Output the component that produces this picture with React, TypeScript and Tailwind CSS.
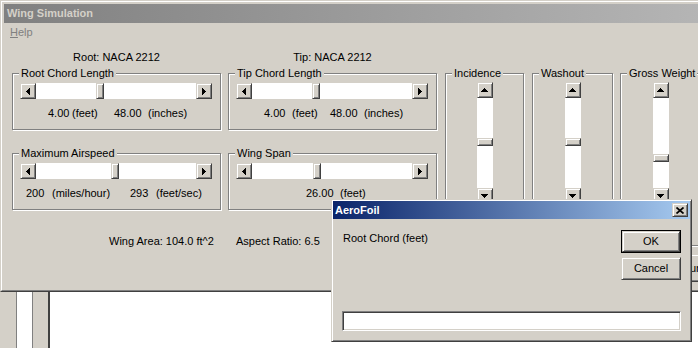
const FACE = "bg-[#d4d0c8]";
const RAISED =
  "border border-t-[#d4d0c8] border-l-[#d4d0c8] border-r-[#404040] border-b-[#404040] shadow-[inset_1px_1px_0_#ffffff,inset_-1px_-1px_0_#808080]";
const SUNKEN =
  "border border-t-[#808080] border-l-[#808080] border-r-white border-b-white shadow-[inset_1px_1px_0_#404040,inset_-1px_-1px_0_#d4d0c8]";

// little pixel triangles used on the scroll buttons
function Tri({ dir }: { dir: "left" | "right" | "up" | "down" }) {
  const rows = [0, 1, 2, 3];
  if (dir === "left" || dir === "right") {
    return (
      <svg width="4" height="7" viewBox="0 0 4 7" shapeRendering="crispEdges">
        {rows.map((i) => (
          <rect key={i} x={dir === "left" ? i : 3 - i} y={3 - i} width="1" height={2 * i + 1} fill="#000" />
        ))}
      </svg>
    );
  }
  return (
    <svg width="7" height="4" viewBox="0 0 7 4" shapeRendering="crispEdges">
      {rows.map((i) => (
        <rect key={i} y={dir === "up" ? i : 3 - i} x={3 - i} height="1" width={2 * i + 1} fill="#000" />
      ))}
    </svg>
  );
}

function HScroll({ pos }: { pos: number }) {
  return (
    <div className="flex h-[16px] w-[192px]">
      <div className={`${RAISED} ${FACE} flex w-[16px] items-center justify-center`}>
        <Tri dir="left" />
      </div>
      <div className="flex flex-1 bg-white">
        <div className={`${RAISED} ${FACE} w-[8px]`} style={{ marginLeft: pos }} />
      </div>
      <div className={`${RAISED} ${FACE} flex w-[16px] items-center justify-center`}>
        <Tri dir="right" />
      </div>
    </div>
  );
}

function VScroll({ pos }: { pos: number }) {
  return (
    <div className="mx-auto flex h-[122px] w-[16px] flex-col">
      <div className={`${RAISED} ${FACE} flex h-[16px] items-center justify-center`}>
        <Tri dir="up" />
      </div>
      <div className="flex flex-1 flex-col bg-white">
        <div className={`${RAISED} ${FACE} h-[8px]`} style={{ marginTop: pos }} />
      </div>
      <div className={`${RAISED} ${FACE} flex h-[16px] items-center justify-center`}>
        <Tri dir="down" />
      </div>
    </div>
  );
}

function Group({ label, className, children }: { label: string; className: string; children: React.ReactNode }) {
  return (
    <div className={`relative border border-[#808080] shadow-[inset_1px_1px_0_#ffffff,1px_1px_0_#ffffff] ${className}`}>
      <span className="absolute -top-[8px] left-[6px] bg-[#d4d0c8] px-[2px] leading-[14px] whitespace-nowrap">{label}</span>
      {children}
    </div>
  );
}

function SliderGroup({ label, pos, children }: { label: string; pos: number; children: React.ReactNode }) {
  return (
    <Group label={label} className="h-[57px] w-[209px] pl-[7px] pt-[9px]">
      <HScroll pos={pos} />
      <div className="mt-[7px] flex h-[14px] leading-[14px] whitespace-nowrap [&>span]:shrink-0">{children}</div>
    </Group>
  );
}

function Button({ children, isDefault }: { children: React.ReactNode; isDefault?: boolean }) {
  return (
    <div className={`h-[23px] w-[60px] ${isDefault ? "border border-black" : ""}`}>
      <div className={`${RAISED} ${FACE} flex h-full items-center justify-center leading-none`}>{children}</div>
    </div>
  );
}

export default function App() {
  return (
    <div className="relative h-[348px] w-[698px] overflow-hidden bg-white font-['Liberation_Sans',Arial,sans-serif] text-[11px] text-black">
      {/* window behind, lower left */}
      <div className="absolute inset-x-0 bottom-0 top-[292px] flex">
        <div className="w-[16px] bg-[#d4d0c8]" />
        <div className="w-[17px] border-x border-[#808080] bg-white" />
        <div className="w-[15px] bg-[#d4d0c8]" />
        <div className="w-[2px] bg-[#404040]" />
        <div className="flex-1 bg-white" />
      </div>

      {/* main window */}
      <div className="absolute left-0 top-0 h-[292px] w-[720px] border border-t-[#d4d0c8] border-l-[#d4d0c8] border-r-[#404040] border-b-[#404040]">
        <div className="flex h-full flex-col border border-t-white border-l-white border-r-[#808080] border-b-[#808080] bg-[#d4d0c8] p-[2px]">
          <div className="flex h-[19px] shrink-0 items-center bg-[linear-gradient(to_right,#808080,#b6b6b6)] pl-[3px] font-bold text-[#d4d0c8]">
            Wing Simulation
          </div>
          <div className="flex h-[19px] shrink-0 items-center pl-[6px] text-[#808080]">
            <span>
              <span className="underline">H</span>elp
            </span>
          </div>

          <div className="flex pl-[8px] pt-[8px]">
            {/* sliders */}
            <div className="flex w-[425px] flex-col">
              <div className="flex h-[14px] gap-[7px] leading-[14px]">
                <div className="w-[209px] text-center">Root: NACA 2212</div>
                <div className="w-[209px] text-center">Tip: NACA 2212</div>
              </div>
              <div className="mt-[9px] flex gap-[7px]">
                <SliderGroup label="Root Chord Length" pos={60}>
                  <span className="ml-[28px] w-[24px]">4.00</span>
                  <span className="w-[42px]">(feet)</span>
                  <span className="w-[34px]">48.00</span>
                  <span>(inches)</span>
                </SliderGroup>
                <SliderGroup label="Tip Chord Length" pos={60}>
                  <span className="ml-[28px] w-[28px]">4.00</span>
                  <span className="w-[38px]">(feet)</span>
                  <span className="w-[34px]">48.00</span>
                  <span>(inches)</span>
                </SliderGroup>
              </div>
              <div className="mt-[23px] flex gap-[7px]">
                <SliderGroup label="Maximum Airspeed" pos={75}>
                  <span className="ml-[6px] w-[26px]">200</span>
                  <span className="w-[78px]">(miles/hour)</span>
                  <span className="w-[26px]">293</span>
                  <span>(feet/sec)</span>
                </SliderGroup>
                <SliderGroup label="Wing Span" pos={61}>
                  <span className="ml-[70px] w-[34px]">26.00</span>
                  <span>(feet)</span>
                </SliderGroup>
              </div>
              <div className="mt-[24px] flex h-[14px] leading-[14px] whitespace-nowrap">
                <span className="ml-[97px] w-[127px] shrink-0">Wing Area: 104.0 ft^2</span>
                <span>Aspect Ratio: 6.5</span>
              </div>
            </div>

            {/* vertical sliders */}
            <div className="ml-[8px] mt-[23px] flex flex-col">
              <div className="flex">
                <Group label="Incidence" className="h-[173px] w-[79px] pt-[8px]">
                  <VScroll pos={40} />
                </Group>
                <Group label="Washout" className="ml-[8px] h-[173px] w-[81px] pt-[8px]">
                  <VScroll pos={40} />
                </Group>
                <Group label="Gross Weight" className="ml-[7px] h-[173px] w-[81px] pt-[8px]">
                  <VScroll pos={56} />
                </Group>
              </div>
              <div className={`${RAISED} ${FACE} ml-[225px] mt-[8px] flex h-[28px] w-[80px] items-center pl-[11px]`}>
                Run
              </div>
            </div>
          </div>
        </div>
      </div>

      {/* AeroFoil dialog */}
      <div className={`absolute left-[331px] top-[199px] flex h-[143px] w-[361px] flex-col p-[1px] ${FACE} border border-t-[#d4d0c8] border-l-[#d4d0c8] border-r-[#404040] border-b-[#404040] shadow-[inset_1px_1px_0_#ffffff,inset_-1px_-1px_0_#808080]`}>
        <div className="flex h-[18px] shrink-0 items-center justify-between bg-[linear-gradient(to_right,#0a246a,#a6caf0)] pl-[2px] font-bold text-white">
          <span>AeroFoil</span>
          <div className={`${RAISED} ${FACE} mr-[2px] flex h-[14px] w-[16px] items-center justify-center`}>
            <svg width="8" height="7" viewBox="0 0 8 7">
              <path d="M0.5 0.5 L7.5 6.5 M7.5 0.5 L0.5 6.5" stroke="#000" strokeWidth="1.7" />
            </svg>
          </div>
        </div>
        <div className="flex flex-1 flex-col px-[9px] pb-[9px] pt-[11px]">
          <div className="flex justify-between">
            <span className="mt-[1px] pl-[1px] leading-[14px]">Root Chord (feet)</span>
            <div className="flex flex-col gap-[4px]">
              <Button isDefault>OK</Button>
              <Button>Cancel</Button>
            </div>
          </div>
          <div className={`mt-auto h-[20px] w-full bg-white ${SUNKEN}`} />
        </div>
      </div>
    </div>
  );
}
